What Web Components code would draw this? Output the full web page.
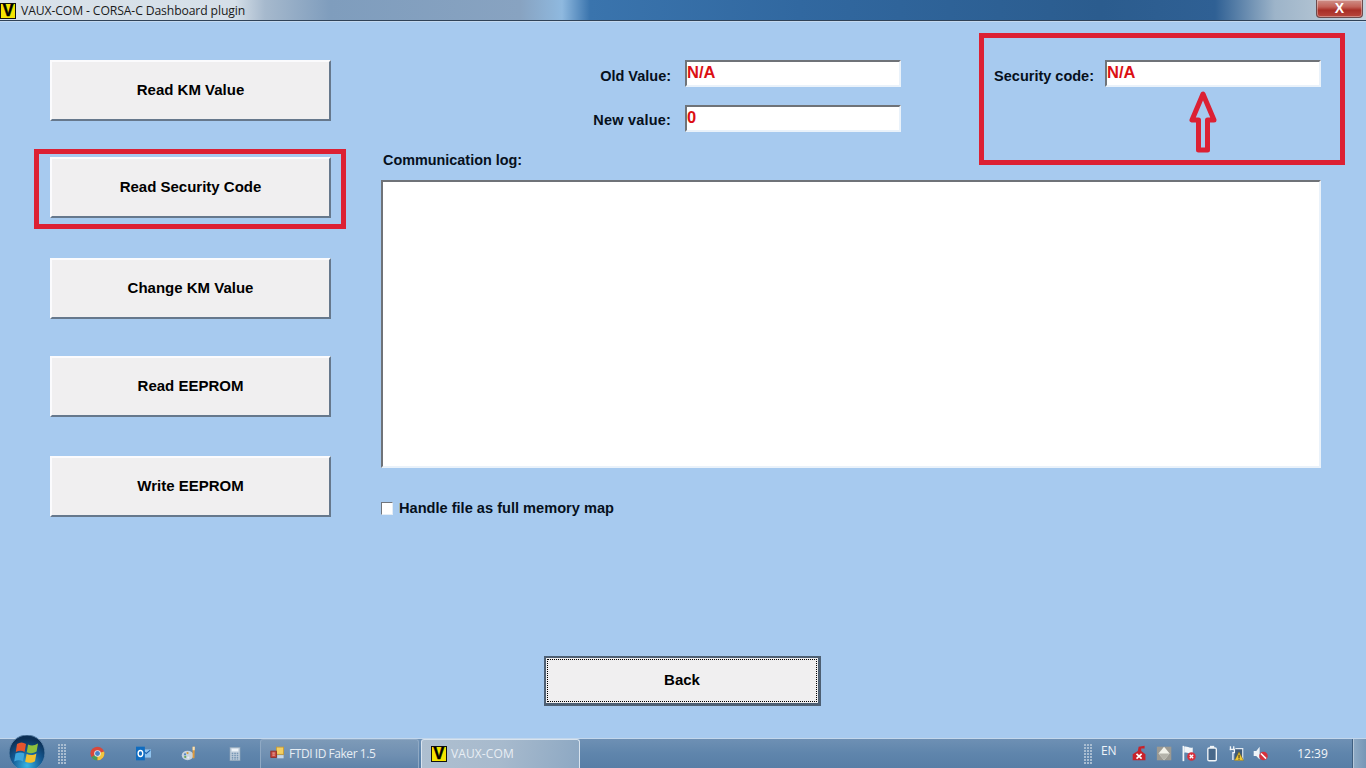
<!DOCTYPE html>
<html>
<head>
<meta charset="utf-8">
<title>VAUX-COM</title>
<style>
  html, body { margin: 0; height: 100%; overflow: hidden; }
  body { font-family: "Liberation Sans", Arial, sans-serif; }
</style>
</head>
<body>
<vx-window>
  <vx-titlebar slot="title">VAUX-COM - CORSA-C Dashboard plugin</vx-titlebar>

  <vx-button slot="side" style="margin-top:39px">Read KM Value</vx-button>
  <vx-button slot="side" style="margin-top:36px">Read Security Code</vx-button>
  <vx-button slot="side" style="margin-top:40px">Change KM Value</vx-button>
  <vx-button slot="side" style="margin-top:37px">Read EEPROM</vx-button>
  <vx-button slot="side" style="margin-top:39px">Write EEPROM</vx-button>

  <vx-values slot="values">
    <vx-field slot="stack" label="Old Value:" value="N/A"></vx-field>
    <vx-field slot="stack" label="New value:" value="0" style="--label-top:7px;letter-spacing:.2px"></vx-field>
    <vx-field slot="single" label="Security code:" value="N/A" style="gap:11px"></vx-field>
  </vx-values>
  <vx-log slot="log" label="Communication log:"></vx-log>
  <vx-check slot="log">Handle file as full memory map</vx-check>

  <vx-button slot="footer" focused>Back</vx-button>

  <vx-mark slot="over" x="34" y="128" w="312" h="80"></vx-mark>
  <vx-mark slot="over" x="979" y="12" w="366" h="132"></vx-mark>
  <vx-arrow slot="over" x="1187" y="67"></vx-arrow>
</vx-window>

<vx-taskbar>
  <vx-orb></vx-orb>
  <vx-grip style="width:16px;padding-right:4px"></vx-grip>
  <vx-pin>
    <svg width="15" height="15" viewBox="0 0 22 22">
      <circle cx="11" cy="11" r="10" fill="#d9483b"/>
      <path d="M11 11 L2.3 16 A10 10 0 0 1 4 3.8 Z" fill="#d9483b"/>
      <path d="M11 11 L11 21 A10 10 0 0 1 2.3 16 Z" fill="#4a9e5c"/>
      <path d="M11 11 L20.6 8 A10 10 0 0 1 11 21 Z" fill="#f0c63f"/>
      <circle cx="11" cy="11" r="4.8" fill="#e9eef3"/>
      <circle cx="11" cy="11" r="3.6" fill="#4a82c9"/>
    </svg>
  </vx-pin>
  <vx-pin>
    <svg width="17" height="15" viewBox="0 0 24 22">
      <rect x="9" y="5" width="14" height="12" fill="#8fc3ee"/>
      <path d="M10 6 L16 11 L22 6" fill="none" stroke="#1d5fa8" stroke-width="1.5"/>
      <rect x="1" y="1" width="13" height="20" fill="#0f6cc0"/>
      <ellipse cx="7.5" cy="11" rx="3.4" ry="4.4" fill="none" stroke="#fff" stroke-width="2"/>
    </svg>
  </vx-pin>
  <vx-pin>
    <svg width="16" height="16" viewBox="0 0 22 22">
      <ellipse cx="9" cy="13" rx="8" ry="6.5" fill="#c7d3de"/>
      <circle cx="5.5" cy="11.5" r="1.5" fill="#4c83c4"/>
      <circle cx="9" cy="9.6" r="1.5" fill="#d9a13a"/>
      <circle cx="5.8" cy="15" r="1.5" fill="#6ca85a"/>
      <circle cx="10" cy="16" r="1.5" fill="#e9eef3"/>
      <path d="M16 1 L19 1 L18.5 17 L16 17 Z" fill="#e09a3c"/>
      <path d="M16 1 L19 1 L18.8 6 L16 6 Z" fill="#f5e2bb"/>
    </svg>
  </vx-pin>
  <vx-pin>
    <svg width="12" height="16" viewBox="0 0 18 22">
      <rect x="1.5" y="1" width="15" height="20" fill="#c3d1de" stroke="#8ea4b8"/>
      <rect x="4" y="3" width="10" height="4" fill="#eef4f9"/>
      <path d="M4 10 h2.5 M7.8 10 h2.5 M11.5 10 h2.5 M4 13 h2.5 M7.8 13 h2.5 M11.5 13 h2.5 M4 16 h2.5 M7.8 16 h2.5 M11.5 16 h2.5 M4 18.6 h2.5 M7.8 18.6 h2.5 M11.5 18.6 h2.5" stroke="#5f84a8" stroke-width="1.6"/>
    </svg>
  </vx-pin>

  <vx-task label="FTDI ID Faker 1.5">
    <svg width="16" height="15" viewBox="0 0 20 18">
      <rect x="8" y="1" width="9" height="9" fill="#f3cf62" stroke="#c99a2e"/>
      <rect x="1" y="6" width="7" height="8" fill="#c6473c" stroke="#8d2c26"/>
      <path d="M3 8.5 h3 M3 11 h3" stroke="#f1d5cf"/>
      <rect x="9" y="11" width="8" height="4" fill="#c9d7e4"/>
    </svg>
  </vx-task>
  <vx-task label="VAUX-COM" active><vx-logo size="16"></vx-logo></vx-task>

  <span style="flex:1"></span>

  <vx-grip style="width:16px"></vx-grip>
  <vx-tray-lang>EN</vx-tray-lang>
  <vx-tray-icon>
    <svg width="17" height="17" viewBox="0 0 20 20">
      <path d="M9 2 L16 1 L16 4 L12 4 L12 7 L17 11 L17 18 L2 18 L2 11 L8 7 Z" fill="#c8222a"/>
      <path d="M6.5 10.5 L12.5 16 M12.5 10.5 L6.5 16" stroke="#fff" stroke-width="2"/>
    </svg>
  </vx-tray-icon>
  <vx-tray-icon>
    <svg width="17" height="17" viewBox="0 0 20 20">
      <rect x="1" y="2" width="17" height="16" fill="#9c9a92"/>
      <path d="M9.5 2 L16 10 L9.5 18 L3 10 Z" fill="#f2f2ea"/>
      <path d="M3 10 L16 10 L9.5 18 Z" fill="#b4b3aa"/>
    </svg>
  </vx-tray-icon>
  <vx-tray-icon>
    <svg width="17" height="17" viewBox="0 0 20 20">
      <path d="M4 1 V19" stroke="#f1f5f8" stroke-width="2"/>
      <path d="M5 2 C9 1 10 4 15 3 L15 10 C10 11 9 8 5 9 Z" fill="#f1f5f8"/>
      <circle cx="13.5" cy="13.5" r="5" fill="#d6303c"/>
      <path d="M11.5 11.5 L15.5 15.5 M15.5 11.5 L11.5 15.5" stroke="#fff" stroke-width="1.6"/>
    </svg>
  </vx-tray-icon>
  <vx-tray-icon>
    <svg width="17" height="17" viewBox="0 0 20 20">
      <rect x="7" y="1" width="5" height="2.5" fill="#f1f5f8"/>
      <rect x="4.5" y="3.5" width="10" height="15" rx="1.5" fill="#47688a" stroke="#f1f5f8" stroke-width="1.6"/>
    </svg>
  </vx-tray-icon>
  <vx-tray-icon>
    <svg width="18" height="17" viewBox="0 0 22 20">
      <path d="M3 1 V6 M7 1 V6 M2 5 H8 V9 H6 V18" stroke="#f1f5f8" stroke-width="1.6" fill="none"/>
      <path d="M9 4 H18 V18 H8" fill="#3e5a78" stroke="#e4ebf1" stroke-width="1.4"/>
      <path d="M13.5 8 L19 18.5 L8 18.5 Z" fill="#f0c832" stroke="#6d5a12" stroke-width=".6"/>
      <path d="M13.5 11.5 V15.5 M13.5 16.3 V17.6" stroke="#222" stroke-width="1.2"/>
    </svg>
  </vx-tray-icon>
  <vx-tray-icon>
    <svg width="17" height="17" viewBox="0 0 20 20">
      <path d="M2 7 H5 L9 2 V17 L5 13 H2 Z" fill="#eef3f7"/>
      <circle cx="13.5" cy="13" r="5" fill="#d6303c"/>
      <path d="M10.5 10 L16.5 16" stroke="#fff" stroke-width="1.8"/>
    </svg>
  </vx-tray-icon>
  <vx-clock>12:39</vx-clock>
  <vx-show-desktop></vx-show-desktop>
</vx-taskbar>

<script>
class VxWindow extends HTMLElement {
  constructor() {
    super();
    this.attachShadow({ mode: 'open' });
    this.shadowRoot.innerHTML = `<style>
  :host { display: flex; flex-direction: column; height: 738px; position: relative; background: #a7caef; }
  .body { flex: 1; display: flex; flex-direction: column; position: relative; }
  .columns { flex: 1; display: flex; }
  .side { width: 281px; margin-left: 50px; display: flex; flex-direction: column; }
  .content { width: 940px; margin-left: 50px; display: flex; flex-direction: column; }
  .footer { display: flex; padding: 0 0 32px 544px; }
  ::slotted(vx-button[slot="footer"]) { width: 277px; height: 50px; }
</style>
<slot name="title"></slot>
<div class="body">
  <div class="columns">
    <div class="side"><slot name="side"></slot></div>
    <div class="content"><slot name="values"></slot><slot name="log"></slot></div>
  </div>
  <div class="footer"><slot name="footer"></slot></div>
  <slot name="over"></slot>
</div>`;
  }
}

class VxLogo extends HTMLElement {
  constructor() {
    super();
    this.attachShadow({ mode: 'open' });
    const size = Number(this.getAttribute('size') || 16);
    this.shadowRoot.innerHTML = `<style>
  :host { display: inline-flex; }
  .v { width: ${size}px; height: ${size}px; box-sizing: border-box; background: #f4e400; border: 1px solid #111;
    display: flex; align-items: center; justify-content: center; color: #000;
    font: bold ${size}px/1 "Liberation Sans", sans-serif; -webkit-text-stroke: .5px #000; }
</style><div class="v">V</div>`;
  }
}

class VxTitlebar extends HTMLElement {
  constructor() {
    super();
    this.attachShadow({ mode: 'open' });
    this.shadowRoot.innerHTML = `<style>
  :host { display: flex; align-items: flex-start; height: 21px; box-sizing: border-box; position: relative;
    border-bottom: 1px solid #2f4258; box-shadow: 0 1px 0 #c4d9ef;
    background: linear-gradient(90deg, #d9e2ea 0, #d5dfe8 235px, #a6b9cd 265px, #7f9dbd 330px, #88a3c1 520px, #8fb9df 562px, #3a74ad 590px, #3168a0 800px, #2b5c8e 1100px, #2f6094 1215px, #9db4c9 1275px, #c6d2dc 1366px);
  }
  .logo { margin: 3px 5px 0 0; display: flex; }
  .text { font: 12.2px/21px "Open Sans", "Noto Sans", sans-serif; color: #1a1a1a; white-space: nowrap; letter-spacing: -.12px; }
  .spacer { flex: 1; }
  .close { width: 47px; height: 18px; margin-right: 3px; box-sizing: border-box; border: 1px solid #6b4a4c; border-top: 0;
    border-radius: 0 0 4px 4px; color: #fff; font: bold 14px/16px "Liberation Sans", sans-serif; text-align: center;
    background: linear-gradient(180deg, #cf9089 0, #c26258 40%, #a82e26 60%, #b8473c 100%); box-shadow: 0 0 0 1px rgba(255,255,255,.35) inset; }
</style>
<span class="logo"><vx-logo size="16"></vx-logo></span>
<span class="text"><slot></slot></span>
<span class="spacer"></span>
<span class="close">X</span>`;
  }
}

class VxButton extends HTMLElement {
  constructor() {
    super();
    this.attachShadow({ mode: 'open' });
    this.shadowRoot.innerHTML = `<style>
  :host { display: flex; flex: none; height: 61px; box-sizing: border-box; background: #f0eff0; color: #000;
    border: 2px solid; border-color: #fbfbfd #66788c #66788c #fbfbfd; font: bold 15px "Liberation Sans", sans-serif; }
  :host([focused]) { border-color: #4d5f73; border-width: 2px 3px 3px 2px; padding: 1px; }
  .inner { flex: 1; display: flex; align-items: center; justify-content: center; padding-bottom: 3px; }
  :host([focused]) .inner { border: 1px dotted #000; padding-bottom: 2px; }
</style><div class="inner"><slot></slot></div>`;
  }
}

class VxValues extends HTMLElement {
  constructor() {
    super();
    this.attachShadow({ mode: 'open' });
    this.shadowRoot.innerHTML = `<style>
  :host { display: flex; justify-content: flex-end; align-items: flex-start; gap: 93px; padding-top: 39px; height: 92px; }
  .stack { display: flex; flex-direction: column; align-items: flex-end; gap: 18px; }
</style>
<div class="stack"><slot name="stack"></slot></div>
<slot name="single"></slot>`;
  }
}

class VxField extends HTMLElement {
  constructor() {
    super();
    this.attachShadow({ mode: 'open' });
    this.shadowRoot.innerHTML = `<style>
  :host { display: flex; gap: 14px; font: bold 14.5px "Liberation Sans", sans-serif; color: #06101c; }
  .label { padding-top: var(--label-top, 8px); line-height: 17px; white-space: nowrap; }
  .input { width: 216px; height: 27px; box-sizing: border-box; background: #fff; border: 2px solid;
    border-color: #6f7378 #eaf2fa #eaf2fa #6f7378; color: #dc0f14; letter-spacing: 0;
    font: bold 16.5px/20px "Liberation Sans", sans-serif; }
</style>
<span class="label"></span><div class="input"></div>`;
    this.shadowRoot.querySelector('.label').textContent = this.getAttribute('label');
    this.shadowRoot.querySelector('.input').textContent = this.getAttribute('value');
  }
}

class VxLog extends HTMLElement {
  constructor() {
    super();
    this.attachShadow({ mode: 'open' });
    this.shadowRoot.innerHTML = `<style>
  :host { display: block; font: bold 14.4px "Liberation Sans", sans-serif; color: #06101c; }
  .label { padding: 0 0 11px 2px; line-height: 17px; }
  .box { height: 288px; box-sizing: border-box; background: #fff; border: 2px solid; border-color: #6f7378 #eaf2fa #eaf2fa #6f7378; }
</style>
<div class="label"></div><div class="box"></div>`;
    this.shadowRoot.querySelector('.label').textContent = this.getAttribute('label');
  }
}

class VxCheck extends HTMLElement {
  constructor() {
    super();
    this.attachShadow({ mode: 'open' });
    this.shadowRoot.innerHTML = `<style>
  :host { display: flex; align-items: center; gap: 6px; margin-top: 32px; font: bold 14.6px/17px "Liberation Sans", sans-serif; color: #06101c; }
  .box { width: 12px; height: 13px; box-sizing: border-box; background: #fff; border: 1px solid; border-color: #70757c #e4edf6 #e4edf6 #70757c; }
</style><span class="box"></span><slot></slot>`;
  }
}

class VxMark extends HTMLElement {
  constructor() {
    super();
    this.attachShadow({ mode: 'open' });
    const a = n => this.getAttribute(n);
    this.shadowRoot.innerHTML = `<style>
  :host { position: absolute; left: ${a('x')}px; top: ${a('y')}px; width: ${a('w')}px; height: ${a('h')}px;
    box-sizing: border-box; border: 5px solid #dc2033; pointer-events: none; }
</style>`;
  }
}

class VxArrow extends HTMLElement {
  constructor() {
    super();
    this.attachShadow({ mode: 'open' });
    const a = n => this.getAttribute(n);
    this.shadowRoot.innerHTML = `<style>
  :host { position: absolute; left: ${a('x')}px; top: ${a('y')}px; width: 32px; height: 66px; }
</style>
<svg width="32" height="66" viewBox="0 0 32 66">
  <path d="M16 6 L5 32 L11.5 32 L11.5 62 L20.5 62 L20.5 32 L27 32 Z" fill="none" stroke="#dc2033" stroke-width="5" stroke-linejoin="round"/>
</svg>`;
  }
}

class VxTaskbar extends HTMLElement {
  constructor() {
    super();
    this.attachShadow({ mode: 'open' });
    this.shadowRoot.innerHTML = `<style>
  :host { display: flex; align-items: stretch; height: 30px; box-sizing: border-box; position: relative; color: #f2f6fa;
    border-top: 1px solid #c3d7ec;
    background: linear-gradient(180deg, #6e90b4 0, #5f85ac 50%, #587ea6 100%); }
</style><slot></slot>`;
  }
}

class VxOrb extends HTMLElement {
  constructor() {
    super();
    this.attachShadow({ mode: 'open' });
    this.shadowRoot.innerHTML = `<style>
  :host { display: block; width: 54px; position: relative; flex: none; }
  svg { position: absolute; left: 8px; top: -4px; }
</style>
<svg width="38" height="33" viewBox="0 0 38 33">
  <defs>
    <radialGradient id="orb" cx="50%" cy="85%" r="75%">
      <stop offset="0" stop-color="#37b6e6"/><stop offset=".55" stop-color="#145a94"/><stop offset="1" stop-color="#0c2f55"/>
    </radialGradient>
  </defs>
  <circle cx="19" cy="18" r="18" fill="url(#orb)" stroke="#5f86ac"/>
  <path d="M9 9 C12 7 15 7 18 9 L16.6 17 C14 15.4 11 15.4 7.8 17 Z" fill="#e6552d"/>
  <path d="M20 9.4 C23 11 26 11 30 8.6 L28.6 16.6 C25 18.6 22 18.6 18.8 17.2 Z" fill="#8fc03c"/>
  <path d="M7.5 18.6 C11 17 14 17 16.4 18.6 L15 26.4 C12.4 25 9.4 25 6.2 26.6 Z" fill="#3fa6dd"/>
  <path d="M18.6 19 C22 20.4 25 20.4 28.4 18.4 L27 26.2 C23.6 28.2 20.6 28.2 17.2 26.8 Z" fill="#f3c02f"/>
</svg>`;
  }
}

class VxGrip extends HTMLElement {
  constructor() {
    super();
    this.attachShadow({ mode: 'open' });
    this.shadowRoot.innerHTML = `<style>
  :host { display: flex; flex: none; align-items: center; justify-content: center; }
  .dots { width: 9px; height: 20px; background-image: radial-gradient(circle at 1px 1px, #a9bdd1 0, #a9bdd1 1px, transparent 1.2px);
    background-size: 3px 3px; }
</style><div class="dots"></div>`;
  }
}

class VxPin extends HTMLElement {
  constructor() {
    super();
    this.attachShadow({ mode: 'open' });
    this.shadowRoot.innerHTML = `<style>
  :host { display: flex; flex: none; width: 46px; align-items: center; justify-content: center; }
</style><slot></slot>`;
  }
}

class VxTask extends HTMLElement {
  constructor() {
    super();
    this.attachShadow({ mode: 'open' });
    this.shadowRoot.innerHTML = `<style>
  :host { display: flex; flex: none; align-items: center; gap: 3px; width: 159px; box-sizing: border-box; margin: 0 0 0 2px; padding: 0 0 1px 9px;
    border: 1px solid #8fa9c4; border-bottom: 0; border-radius: 3px 3px 0 0; color: #e6edf4;
    font: 12px "Open Sans", "Noto Sans", sans-serif; letter-spacing: -.45px;
    background: linear-gradient(180deg, #7d9ab8 0, #6f8fb1 55%, #5f83a9 100%); }
  :host([active]) { gap: 4px; border-color: #d8e3ee; color: #e8eef4; letter-spacing: .1px;
    background: linear-gradient(100deg, #aebfd0 0, #a7bacd 50%, #8da8c3 100%); }
  .label { white-space: nowrap; }
  ::slotted(svg), ::slotted(vx-logo) { flex: none; }
</style><slot></slot><span class="label"></span>`;
    this.shadowRoot.querySelector('.label').textContent = this.getAttribute('label');
  }
}

class VxTrayLang extends HTMLElement {
  constructor() {
    super();
    this.attachShadow({ mode: 'open' });
    this.shadowRoot.innerHTML = `<style>
  :host { display: block; flex: none; width: 31px; padding: 3px 0 0 4px; box-sizing: border-box; font: 12px "Open Sans", "Noto Sans", sans-serif; color: #eef3f8; }
</style><slot></slot>`;
  }
}

class VxTrayIcon extends HTMLElement {
  constructor() {
    super();
    this.attachShadow({ mode: 'open' });
    this.shadowRoot.innerHTML = `<style>
  :host { display: flex; flex: none; width: 24.2px; align-items: center; justify-content: center; }
</style><slot></slot>`;
  }
}

class VxClock extends HTMLElement {
  constructor() {
    super();
    this.attachShadow({ mode: 'open' });
    this.shadowRoot.innerHTML = `<style>
  :host { display: flex; flex: none; width: 79px; align-items: center; justify-content: center; font: 12px "Open Sans", "Noto Sans", sans-serif; color: #f2f6fa; }
</style><slot></slot>`;
  }
}

class VxShowDesktop extends HTMLElement {
  constructor() {
    super();
    this.attachShadow({ mode: 'open' });
    this.shadowRoot.innerHTML = `<style>
  :host { display: block; flex: none; width: 14px; border-left: 1px solid #3f5f80; box-sizing: border-box;
    background: linear-gradient(90deg, #8fabc6, #7796b6); box-shadow: 1px 0 0 rgba(255,255,255,.35) inset; }
</style>`;
  }
}

customElements.define('vx-logo', VxLogo);
customElements.define('vx-window', VxWindow);
customElements.define('vx-titlebar', VxTitlebar);
customElements.define('vx-button', VxButton);
customElements.define('vx-values', VxValues);
customElements.define('vx-field', VxField);
customElements.define('vx-log', VxLog);
customElements.define('vx-check', VxCheck);
customElements.define('vx-mark', VxMark);
customElements.define('vx-arrow', VxArrow);
customElements.define('vx-taskbar', VxTaskbar);
customElements.define('vx-orb', VxOrb);
customElements.define('vx-grip', VxGrip);
customElements.define('vx-pin', VxPin);
customElements.define('vx-task', VxTask);
customElements.define('vx-tray-lang', VxTrayLang);
customElements.define('vx-tray-icon', VxTrayIcon);
customElements.define('vx-clock', VxClock);
customElements.define('vx-show-desktop', VxShowDesktop);
</script>
</body>
</html>
